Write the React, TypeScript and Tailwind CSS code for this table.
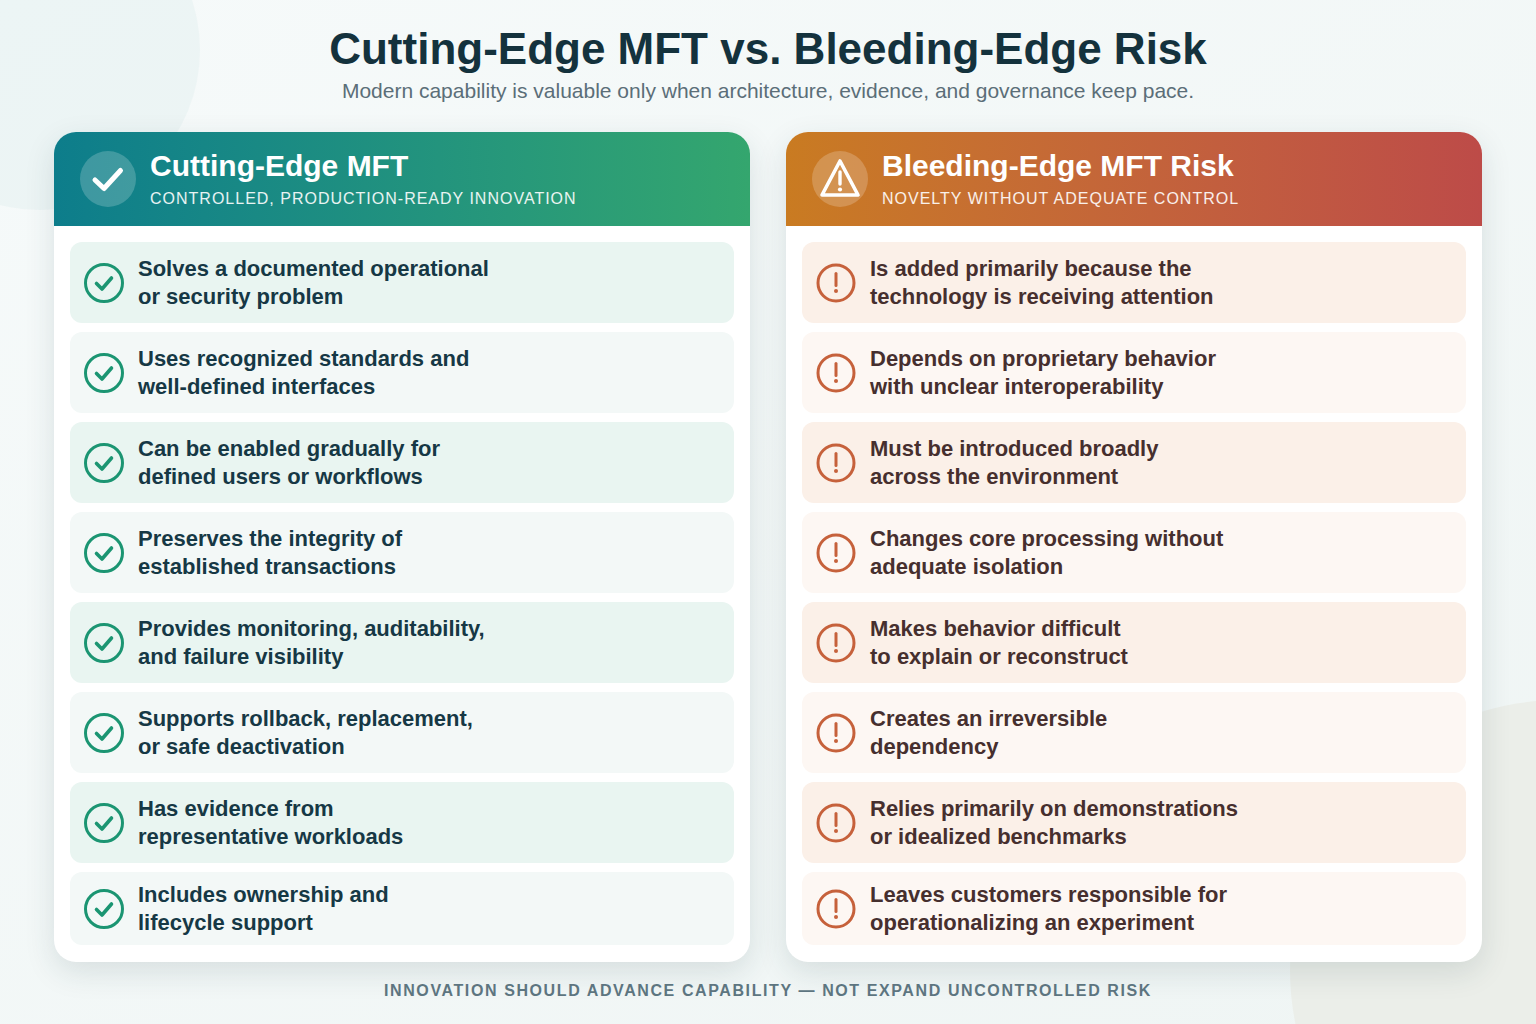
import React from "react";

const good = [
  ["Solves a documented operational", "or security problem"],
  ["Uses recognized standards and", "well-defined interfaces"],
  ["Can be enabled gradually for", "defined users or workflows"],
  ["Preserves the integrity of", "established transactions"],
  ["Provides monitoring, auditability,", "and failure visibility"],
  ["Supports rollback, replacement,", "or safe deactivation"],
  ["Has evidence from", "representative workloads"],
  ["Includes ownership and", "lifecycle support"],
];

const bad = [
  ["Is added primarily because the", "technology is receiving attention"],
  ["Depends on proprietary behavior", "with unclear interoperability"],
  ["Must be introduced broadly", "across the environment"],
  ["Changes core processing without", "adequate isolation"],
  ["Makes behavior difficult", "to explain or reconstruct"],
  ["Creates an irreversible", "dependency"],
  ["Relies primarily on demonstrations", "or idealized benchmarks"],
  ["Leaves customers responsible for", "operationalizing an experiment"],
];

function CheckIcon() {
  return (
    <svg width="40" height="40" viewBox="0 0 40 40" className="shrink-0">
      <circle cx="20" cy="20" r="18.5" fill="none" stroke="#1b9572" strokeWidth="3" />
      <path d="M12.5 20.5 L18 26 L27.5 15" fill="none" stroke="#1b9572" strokeWidth="3.6" strokeLinecap="round" strokeLinejoin="round" />
    </svg>
  );
}

function AlertIcon() {
  return (
    <svg width="40" height="40" viewBox="0 0 40 40" className="shrink-0">
      <circle cx="20" cy="20" r="18" fill="none" stroke="#c6613b" strokeWidth="3" />
      <path d="M20 10.5 L20 22.5" fill="none" stroke="#c6613b" strokeWidth="3" strokeLinecap="round" />
      <circle cx="20" cy="28" r="2" fill="#c6613b" />
    </svg>
  );
}

function Item({ lines, tone, last, variant }: { lines: string[]; tone: boolean; last: boolean; variant: "good" | "bad" }) {
  const bg =
    variant === "good"
      ? tone
        ? "bg-[#e9f5f1]"
        : "bg-[#f3f8f7]"
      : tone
      ? "bg-[#fbf0e8]"
      : "bg-[#fdf7f3]";
  const color = variant === "good" ? "text-[#163845]" : "text-[#462f2e]";
  return (
    <div className={`flex items-center gap-[14px] rounded-[12px] pl-[14px] ${bg} ${last ? "h-[73px]" : "h-[81px]"}`}>
      {variant === "good" ? <CheckIcon /> : <AlertIcon />}
      <div className={`text-[22px] font-bold leading-[28px] ${color}`}>
        <div>{lines[0]}</div>
        <div>{lines[1]}</div>
      </div>
    </div>
  );
}

function Card({ variant }: { variant: "good" | "bad" }) {
  const items = variant === "good" ? good : bad;
  return (
    <div className="flex w-[696px] flex-col overflow-hidden rounded-[22px] bg-white shadow-[0_10px_30px_rgba(30,60,70,0.13)]">
      <div
        className={`flex h-[94px] items-center gap-[14px] pl-[26px] ${
          variant === "good"
            ? "bg-gradient-to-r from-[#0d7d8b] to-[#34a66e]"
            : "bg-gradient-to-r from-[#c97b21] to-[#bd4b48]"
        }`}
      >
        <div className="flex h-[56px] w-[56px] shrink-0 items-center justify-center rounded-full bg-white/20">
          {variant === "good" ? (
            <svg width="56" height="56" viewBox="0 0 56 56">
              <path d="M15 29 L24 37.5 L40.5 19.5" fill="none" stroke="#ffffff" strokeWidth="5" strokeLinecap="round" strokeLinejoin="round" />
            </svg>
          ) : (
            <svg width="56" height="56" viewBox="0 0 56 56">
              <path d="M28 10 L46 44 L10 44 Z" fill="none" stroke="#ffffff" strokeWidth="3.6" strokeLinejoin="round" />
              <path d="M28 21 L28 33" fill="none" stroke="#ffffff" strokeWidth="3.4" strokeLinecap="round" />
              <circle cx="28" cy="38.5" r="2.1" fill="#ffffff" />
            </svg>
          )}
        </div>
        <div className="flex flex-col text-white">
          <div className="text-[30px] font-bold leading-[34px]">
            {variant === "good" ? "Cutting-Edge MFT" : "Bleeding-Edge MFT Risk"}
          </div>
          <div className="mt-[6px] text-[16px] leading-[20px] tracking-[1px] text-white/90">
            {variant === "good" ? "CONTROLLED, PRODUCTION-READY INNOVATION" : "NOVELTY WITHOUT ADEQUATE CONTROL"}
          </div>
        </div>
      </div>
      <div className="flex flex-col gap-[9px] px-[16px] pt-[16px] pb-[17px]">
        {items.map((l, i) => (
          <Item key={i} lines={l} tone={i % 2 === 0} last={i === items.length - 1} variant={variant} />
        ))}
      </div>
    </div>
  );
}

export default function App() {
  return (
    <div
      className="relative h-[1024px] w-[1536px] overflow-hidden bg-gradient-to-br from-[#f6fafa] to-[#eff5f4]"
      style={{ fontFamily: '"Liberation Sans", Arial, sans-serif' }}
    >
      <div className="absolute left-[-120px] top-[-110px] h-[320px] w-[320px] rounded-full bg-[#e8f2f2]/70" />
      <div className="absolute left-[1290px] top-[700px] h-[540px] w-[540px] rounded-full bg-[#ebeee9]" />
      <div className="relative flex flex-col items-center pt-[22px]">
        <h1 className="text-[44px] font-bold leading-[54px] text-[#14323d]">
          Cutting-Edge MFT vs. Bleeding-Edge Risk
        </h1>
        <p className="mt-[1px] text-[21px] leading-[28px] text-[#5b6e78]">
          Modern capability is valuable only when architecture, evidence, and governance keep pace.
        </p>
        <div className="mt-[27px] flex gap-[36px]">
          <Card variant="good" />
          <Card variant="bad" />
        </div>
        <div className="mt-[19px] text-[16px] font-bold leading-[20px] tracking-[1.6px] text-[#5d7580]">
          INNOVATION SHOULD ADVANCE CAPABILITY — NOT EXPAND UNCONTROLLED RISK
        </div>
      </div>
    </div>
  );
}
